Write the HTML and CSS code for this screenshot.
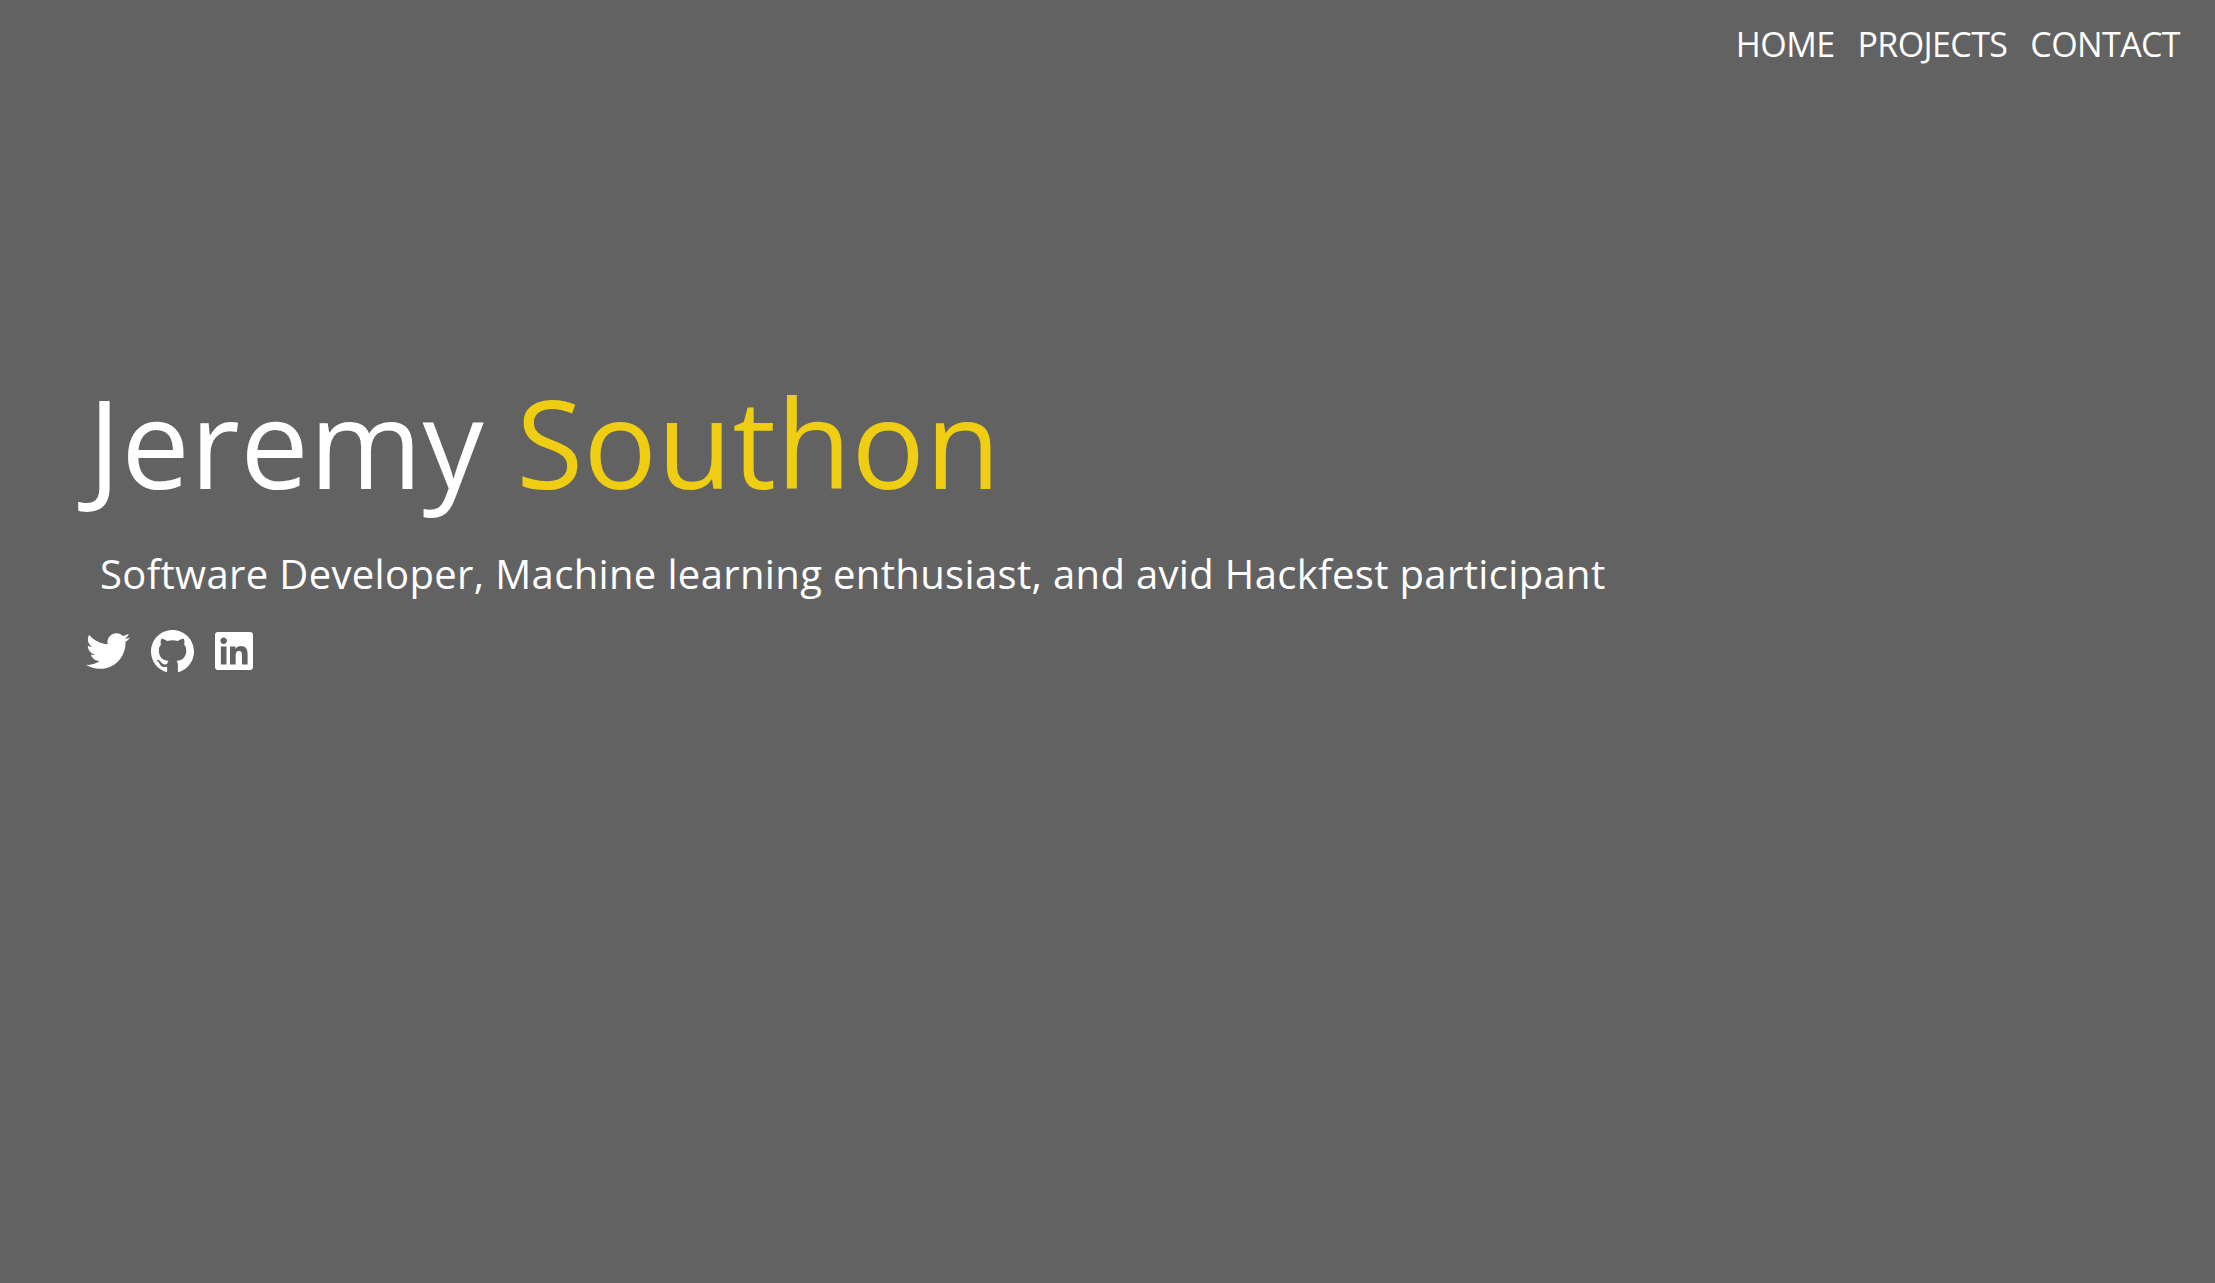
FILE: index.html
```html
<!DOCTYPE html>
<html lang="en">
<head>
<meta charset="utf-8">
<title>Jeremy Southon</title>
<link rel="stylesheet" href="styles.css">
</head>
<body>
<nav class="nav">
  <a class="nav-link" href="#">HOME</a>
  <a class="nav-link" href="#">PROJECTS</a>
  <a class="nav-link" href="#">CONTACT</a>
</nav>
<main class="hero">
  <h1 class="title">Jeremy <span class="accent">Southon</span></h1>
  <p class="subtitle">Software Developer, Machine learning enthusiast, and avid Hackfest participant</p>
  <div class="socials">
    <a href="#" class="social" aria-label="Twitter"><svg class="icon-twitter" viewBox="0 0 512 512"><path d="M459.37 151.716c.325 4.548.325 9.097.325 13.645 0 138.72-105.583 298.558-298.558 298.558-59.452 0-114.68-17.219-161.137-47.106 8.447.974 16.568 1.299 25.34 1.299 49.055 0 94.213-16.568 130.274-44.832-46.132-.975-84.792-31.188-98.112-72.772 6.498.974 12.995 1.624 19.818 1.624 9.421 0 18.843-1.3 27.614-3.573-48.081-9.747-84.143-51.98-84.143-102.985v-1.299c13.969 7.797 30.214 12.67 47.431 13.319-28.264-18.843-46.781-51.005-46.781-87.391 0-19.492 5.197-37.36 14.294-52.954 51.655 63.675 129.3 105.258 216.365 109.807-1.624-7.797-2.599-15.918-2.599-24.04 0-57.828 46.782-104.934 104.934-104.934 30.213 0 57.502 12.67 76.67 33.137 23.715-4.548 46.456-13.32 66.599-25.34-7.798 24.366-24.366 44.833-46.132 57.827 21.117-2.273 41.584-8.122 60.426-16.243-14.292 20.791-32.161 39.308-52.628 54.253z"/></svg></a>
    <a href="#" class="social" aria-label="GitHub"><svg class="icon-github" viewBox="0 0 16 16"><path d="M8 0C3.58 0 0 3.58 0 8c0 3.54 2.29 6.53 5.47 7.59.4.07.55-.17.55-.38 0-.19-.01-.82-.01-1.49-2.01.37-2.53-.49-2.69-.94-.09-.23-.48-.94-.82-1.13-.28-.15-.68-.52-.01-.53.63-.01 1.08.58 1.23.82.72 1.21 1.87.87 2.33.66.07-.52.28-.87.51-1.07-1.78-.2-3.64-.89-3.64-3.95 0-.87.31-1.59.82-2.15-.08-.2-.36-1.02.08-2.12 0 0 .67-.21 2.2.82.64-.18 1.32-.27 2-.27.68 0 1.36.09 2 .27 1.53-1.04 2.2-.82 2.2-.82.44 1.1.16 1.92.08 2.12.51.56.82 1.27.82 2.15 0 3.07-1.87 3.75-3.65 3.95.29.25.54.73.54 1.48 0 1.07-.01 1.93-.01 2.2 0 .21.15.46.55.38A8.013 8.013 0 0016 8c0-4.42-3.58-8-8-8z"/></svg></a>
    <a href="#" class="social" aria-label="LinkedIn"><svg class="icon-linkedin" viewBox="0 32 448 448"><path d="M416 32H31.9C14.3 32 0 46.5 0 64.3v383.4C0 465.5 14.3 480 31.9 480H416c17.6 0 32-14.5 32-32.3V64.3c0-17.8-14.4-32.3-32-32.3zM135.4 416H69V202.2h66.5V416zm-33.2-243c-21.3 0-38.5-17.3-38.5-38.5S80.9 96 102.2 96c21.2 0 38.5 17.3 38.5 38.5 0 21.3-17.2 38.5-38.5 38.5zm282.1 243h-66.4V312c0-24.8-.5-56.7-34.5-56.7-34.6 0-39.9 27-39.9 54.9V416h-66.4V202.2h63.7v29.2h.9c8.9-16.8 30.6-34.5 62.9-34.5 67.2 0 79.7 44.3 79.7 101.9V416z"/></svg></a>
  </div>
</main>
</body>
</html>
```
FILE: styles.css
```css
* { box-sizing: border-box; }
html, body { height: 100%; }
body {
  margin: 0;
  background: #626262;
  color: #fff;
  font-family: "Open Sans", "Noto Sans", sans-serif;
  overflow: hidden;
}
.nav {
  display: flex;
  justify-content: flex-end;
  gap: 23px;
  padding: 20px 35px 0 0;
  height: 70px;
}
.nav-link {
  color: #fff;
  text-decoration: none;
  font-size: 34px;
  line-height: 48px;
  letter-spacing: -0.6px;
}
.hero { padding: 297px 0 0 78px; }
.title {
  margin: 0 0 0 10px;
  font-size: 122px;
  font-weight: 400;
  line-height: 150px;
  letter-spacing: 0.4px;
}
.accent { color: #eecd12; }
.subtitle {
  margin: 30px 0 0 22px;
  font-size: 40px;
  line-height: 54px;
  letter-spacing: 0.35px;
}
.socials {
  display: flex;
  align-items: center;
  margin: 28px 0 0 8px;
  height: 44px;
}
.social { display: block; color: #fff; line-height: 0; }
.social svg { fill: currentColor; display: block; }
.icon-twitter { width: 44px; height: 44px; }
.icon-github { width: 43px; height: 43px; margin-left: 21px; }
.icon-linkedin { width: 38px; height: 38px; margin-left: 21px; }
```
